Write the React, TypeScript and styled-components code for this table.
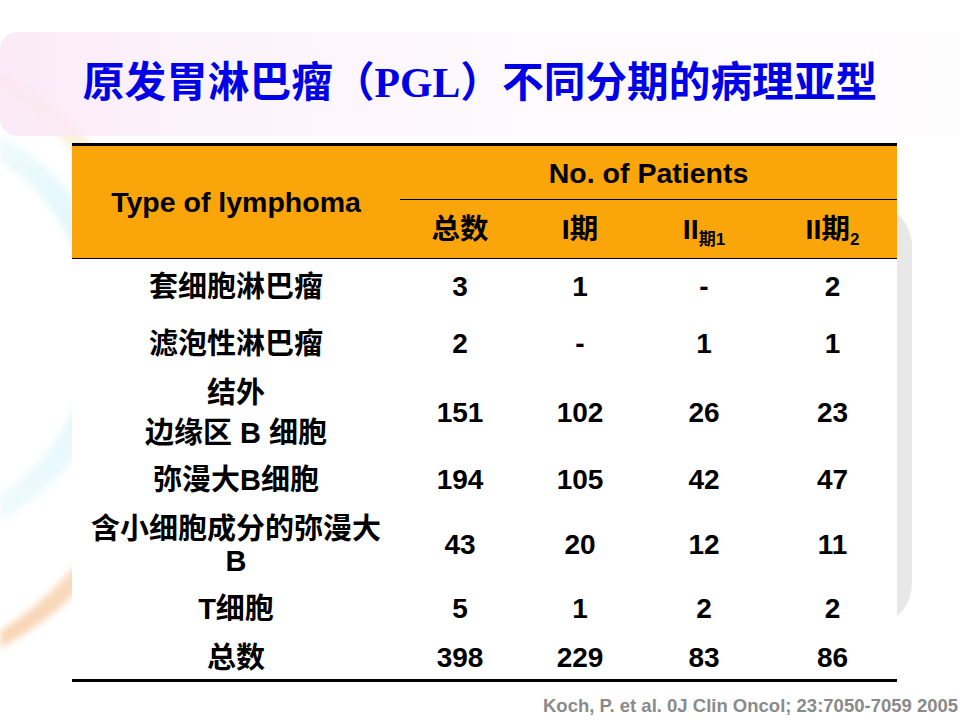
import React from 'react'
import styled, { createGlobalStyle } from 'styled-components'

const GlobalStyle = createGlobalStyle`
  html,
  body {
    margin: 0;
    padding: 0;
    background: #ffffff;
    overflow: hidden;
  }
`

const COLS = '328px 120px 120px 128px 129px'

const Slide = styled.div`
  position: relative;
  width: 960px;
  height: 720px;
  overflow: hidden;
  background: #ffffff;
  font-family: 'Liberation Sans', 'Noto Sans CJK SC', sans-serif;
  color: #000000;
`

const Backdrop = styled.svg`
  position: absolute;
  left: 0;
  top: 0;
  width: 960px;
  height: 720px;
`

const Content = styled.div`
  position: relative;
  display: flex;
  flex-direction: column;
  padding-top: 32px;
`

const TitleBar = styled.div`
  height: 104px;
  display: flex;
  align-items: center;
  justify-content: center;
  border-radius: 18px 0 0 18px;
  background: linear-gradient(
    90deg,
    rgba(250, 228, 246, 0.8) 0%,
    rgba(251, 238, 249, 0.7) 20%,
    rgba(253, 246, 252, 0.6) 55%,
    rgba(253, 251, 253, 0.5) 100%
  );
`

const Title = styled.h1`
  margin: 0;
  font-family: 'Liberation Serif', 'Noto Sans CJK SC', serif;
  font-size: 41.7px;
  font-weight: 700;
  line-height: 1;
  color: #0000e6;
  white-space: nowrap;
`

const Table = styled.div`
  margin: 7px 0 0 72px;
  width: 825px;
  background: #ffffff;
  border-top: 3px solid #000000;
  border-bottom: 3px solid #000000;
`

const Head = styled.div`
  display: grid;
  grid-template-columns: ${COLS};
  grid-template-rows: 54px 58px;
  background: #faa60a;
  border-bottom: 1px solid #000000;
`

const HeadCell = styled.div<{ $col?: string; $row?: string; $rule?: boolean }>`
  display: flex;
  align-items: center;
  justify-content: center;
  grid-column: ${(p) => p.$col || 'auto'};
  grid-row: ${(p) => p.$row || 'auto'};
  box-sizing: border-box;
  border-bottom: ${(p) => (p.$rule ? '1px solid #000000' : 'none')};
  font-size: 28.5px;
  font-weight: 700;
  white-space: nowrap;
`

const HeadText = styled.span`
  line-height: 32px;
`

const Sub = styled.sub`
  font-size: 17px;
  vertical-align: -6px;
  line-height: 0;
`

const Row = styled.div<{ $h: number }>`
  display: grid;
  grid-template-columns: ${COLS};
  align-items: center;
  height: ${(p) => p.$h}px;
`

const Label = styled.div<{ $lh: number }>`
  text-align: center;
  font-size: 29px;
  font-weight: 700;
  line-height: ${(p) => p.$lh}px;
  white-space: nowrap;
`

const Num = styled.div`
  text-align: center;
  font-size: 28px;
  font-weight: 700;
  line-height: 32px;
`

const Cite = styled.div`
  margin: 13px 0 0 543px;
  font-size: 18.5px;
  font-weight: 700;
  line-height: 22px;
  color: #8a8a8a;
  white-space: nowrap;
`

interface RowData {
  label: string[]
  h: number
  lh?: number
  vals: string[]
}

const rows: RowData[] = [
  { label: ['套细胞淋巴瘤'], h: 56, vals: ['3', '1', '-', '2'] },
  { label: ['滤泡性淋巴瘤'], h: 58, vals: ['2', '-', '1', '1'] },
  { label: ['结外', '边缘区 B 细胞'], h: 78, lh: 40, vals: ['151', '102', '26', '23'] },
  { label: ['弥漫大B细胞'], h: 58, vals: ['194', '105', '42', '47'] },
  { label: ['含小细胞成分的弥漫大', 'B'], h: 72, lh: 32, vals: ['43', '20', '12', '11'] },
  { label: ['T细胞'], h: 56, vals: ['5', '1', '2', '2'] },
  { label: ['总数'], h: 42, vals: ['398', '229', '83', '86'] },
]

const Decor = () => (
  <Backdrop viewBox="0 0 960 720">
    <defs>
      <linearGradient id="cyan" x1="0" y1="0" x2="0" y2="1">
        <stop offset="0%" stopColor="#e8f9fc" />
        <stop offset="40%" stopColor="#cdf1f9" />
        <stop offset="100%" stopColor="#e8f9fc" />
      </linearGradient>
      <linearGradient id="peach" x1="0" y1="0" x2="0" y2="1">
        <stop offset="0%" stopColor="#fdf3d6" />
        <stop offset="35%" stopColor="#fbe9cc" />
        <stop offset="100%" stopColor="#f7cba4" />
      </linearGradient>
      <filter id="soft" x="-20%" y="-20%" width="140%" height="140%">
        <feGaussianBlur stdDeviation="3" />
      </filter>
    </defs>
    <rect x="600" y="202" width="312" height="426" rx="45" fill="#e8e8e8" />
    <path
      d="M 0 72 A 325 325 0 0 1 0 648 L 0 631 A 320 320 0 0 0 0 89 Z"
      fill="url(#peach)"
      opacity="0.8"
      filter="url(#soft)"
    />
    <path
      d="M 0 136 A 215 215 0 0 1 0 520 L 0 495 A 200 200 0 0 0 0 161 Z"
      fill="url(#cyan)"
      opacity="0.7"
      filter="url(#soft)"
    />
  </Backdrop>
)

const App = () => {
  return (
    <Slide>
      <GlobalStyle />
      <Decor />
      <Content>
        <TitleBar>
          <Title>原发胃淋巴瘤（PGL）不同分期的病理亚型</Title>
        </TitleBar>

        <Table>
          <Head>
            <HeadCell $row="1 / span 2">
              <HeadText>Type of lymphoma</HeadText>
            </HeadCell>
            <HeadCell $col="2 / span 4" $rule>
              <HeadText>No. of Patients</HeadText>
            </HeadCell>
            <HeadCell>
              <HeadText>总数</HeadText>
            </HeadCell>
            <HeadCell>
              <HeadText>I期</HeadText>
            </HeadCell>
            <HeadCell>
              <HeadText>
                II<Sub>期1</Sub>
              </HeadText>
            </HeadCell>
            <HeadCell>
              <HeadText>
                II期<Sub>2</Sub>
              </HeadText>
            </HeadCell>
          </Head>

          {rows.map((row, i) => (
            <Row key={i} $h={row.h}>
              <Label $lh={row.lh || 32}>
                {row.label.map((line, j) => (
                  <div key={j}>{line}</div>
                ))}
              </Label>
              {row.vals.map((v, j) => (
                <Num key={j}>{v}</Num>
              ))}
            </Row>
          ))}
        </Table>

        <Cite>Koch, P. et al. 0J Clin Oncol; 23:7050-7059 2005</Cite>
      </Content>
    </Slide>
  )
}

export default App
